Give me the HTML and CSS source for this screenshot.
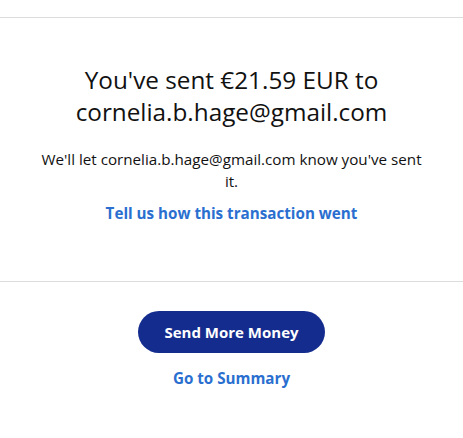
FILE: index.html
```html
<!DOCTYPE html>
<html>
<head>
<meta charset="utf-8">
<link rel="stylesheet" href="styles.css">
</head>
<body>
<div class="page">
  <section class="result">
    <h1 class="title">You've sent €21.59 EUR to cornelia.b.hage@gmail.com</h1>
    <p class="note">We'll let cornelia.b.hage@gmail.com know you've sent it.</p>
    <a class="link" href="#">Tell us how this transaction went</a>
  </section>
  <section class="actions">
    <button class="primary">Send More Money</button>
    <a class="link" href="#">Go to Summary</a>
  </section>
</div>
</body>
</html>
```
FILE: styles.css
```css
html, body {
  margin: 0;
  padding: 0;
  background: #fff;
}
body {
  font-family: "Open Sans", "Noto Sans", sans-serif;
  color: #111;
}
.page {
  width: 463px;
  padding-top: 17px;
}
.result {
  border-top: 1px solid #dcdcdc;
  border-bottom: 1px solid #dcdcdc;
  display: flex;
  flex-direction: column;
  align-items: center;
  text-align: center;
  padding: 46px 20px 58px;
}
.title {
  margin: 0;
  font-size: 24.3px;
  font-weight: 400;
  line-height: 32px;
  width: 330px;
}
.note {
  margin: 20px 0 0;
  font-size: 15.2px;
  line-height: 22px;
  width: 395px;
}
.link {
  display: block;
  color: #2a6fd0;
  font-weight: 700;
  font-size: 15.2px;
  text-decoration: none;
  line-height: 20px;
}
.result .link {
  margin-top: 11px;
}
.actions {
  display: flex;
  flex-direction: column;
  align-items: center;
  padding-top: 29px;
}
.primary {
  width: 187px;
  height: 42px;
  border: none;
  border-radius: 21px;
  background: #142c8e;
  color: #fff;
  font-family: inherit;
  font-weight: 700;
  font-size: 15px;
}
.actions .link {
  margin-top: 15px;
}
```
